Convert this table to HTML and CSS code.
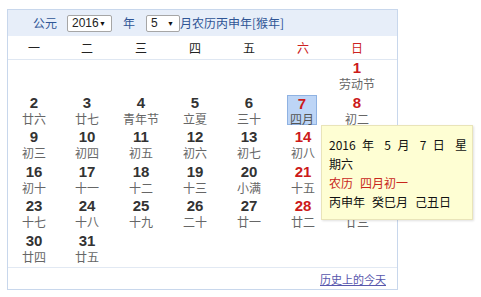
FILE: index.html
```html
<!DOCTYPE html>
<html lang="zh-CN">
<head>
<meta charset="utf-8">
<title>万年历</title>
<link rel="stylesheet" href="styles.css">
</head>
<body>
<div class="cal">
  <div class="cal-head">
    <span class="lbl lbl-era">公元</span>
    <span class="sel sel-year"><span>2016</span><i class="arr">▼</i></span>
    <span class="lbl lbl-year">年</span>
    <span class="sel sel-month"><span>5</span><i class="arr">▼</i></span>
    <span class="lbl">月农历丙申年[猴年]</span>
  </div>
  <div class="weekdays">
    <span>一</span><span>二</span><span>三</span><span>四</span><span>五</span><span class="we">六</span><span class="we">日</span>
  </div>
  <div class="days">
    <div class="cell"></div><div class="cell"></div><div class="cell"></div><div class="cell"></div><div class="cell"></div><div class="cell"></div>
    <div class="cell we"><b>1</b><span>劳动节</span></div>

    <div class="cell"><b>2</b><span>廿六</span></div>
    <div class="cell"><b>3</b><span>廿七</span></div>
    <div class="cell"><b>4</b><span>青年节</span></div>
    <div class="cell"><b>5</b><span>立夏</span></div>
    <div class="cell"><b>6</b><span>三十</span></div>
    <div class="cell we"><div class="today"><b>7</b><span>四月</span></div></div>
    <div class="cell we"><b>8</b><span>初二</span></div>

    <div class="cell"><b>9</b><span>初三</span></div>
    <div class="cell"><b>10</b><span>初四</span></div>
    <div class="cell"><b>11</b><span>初五</span></div>
    <div class="cell"><b>12</b><span>初六</span></div>
    <div class="cell"><b>13</b><span>初七</span></div>
    <div class="cell we"><b>14</b><span>初八</span></div>
    <div class="cell we"><b>15</b><span>初九</span></div>

    <div class="cell"><b>16</b><span>初十</span></div>
    <div class="cell"><b>17</b><span>十一</span></div>
    <div class="cell"><b>18</b><span>十二</span></div>
    <div class="cell"><b>19</b><span>十三</span></div>
    <div class="cell"><b>20</b><span>小满</span></div>
    <div class="cell we"><b>21</b><span>十五</span></div>
    <div class="cell we"><b>22</b><span>十六</span></div>

    <div class="cell"><b>23</b><span>十七</span></div>
    <div class="cell"><b>24</b><span>十八</span></div>
    <div class="cell"><b>25</b><span>十九</span></div>
    <div class="cell"><b>26</b><span>二十</span></div>
    <div class="cell"><b>27</b><span>廿一</span></div>
    <div class="cell we"><b>28</b><span>廿二</span></div>
    <div class="cell we"><b>29</b><span>廿三</span></div>

    <div class="cell"><b>30</b><span>廿四</span></div>
    <div class="cell"><b>31</b><span>廿五</span></div>
  </div>
  <div class="cal-foot"><a href="#" class="hist">历史上的今天</a></div>

  <div class="tip">
    <div class="tip-l1">2016 年 5 月 7 日 星</div>
    <div>期六</div>
    <div class="tip-lunar"><span>农历</span><span>四月初一</span></div>
    <div class="tip-gz"><span>丙申年</span><span>癸巳月</span><span>己丑日</span></div>
  </div>
</div>
</body>
</html>
```

FILE: styles.css
```css
html, body {
  margin: 0;
  padding: 0;
  background: #fff;
}
body {
  font-family: "Noto Sans CJK SC", "Liberation Sans", sans-serif;
  font-size: 12px;
  color: #333;
}
.cal {
  position: relative;
  box-sizing: border-box;
  width: 391px;
  margin: 9px 0 0 7px;
  border: 1px solid #c8d7ec;
}
.cal-head {
  height: 26px;
  background: #e7eef9;
  display: flex;
  align-items: center;
  padding-left: 25px;
  color: #2f5596;
}
.lbl {
  line-height: 16px;
  white-space: nowrap;
}
.sel {
  box-sizing: border-box;
  height: 17px;
  display: flex;
  align-items: center;
  justify-content: space-between;
  background: #fff;
  border: 1px solid #a6a6a6;
  border-radius: 2px;
  padding: 0 5px 0 4px;
  font-family: "Liberation Sans", Arial, sans-serif;
  font-size: 12px;
  color: #222;
}
.sel-year { width: 45px; margin-left: 10px; }
.sel-month { width: 34px; margin-left: 11px; }
.lbl-year { margin-left: 11px; }
.arr {
  font-style: normal;
  font-size: 7px;
  color: #111;
}
.weekdays {
  display: grid;
  grid-template-columns: 52px repeat(6, 54px);
  height: 23px;
  align-items: center;
  border-bottom: 1px solid #dfe7f2;
}
.weekdays span {
  text-align: center;
  color: #222;
}
.weekdays span.we { color: #c22; }

.days {
  display: grid;
  grid-template-columns: 52px repeat(6, 54px);
  grid-auto-rows: 34.5px;
  height: 207px;
  align-content: start;
}
.cell {
  display: flex;
  flex-direction: column;
  align-items: center;
}
.cell b, .today b {
  display: block;
  font-family: "Liberation Sans", Arial, sans-serif;
  font-size: 15px;
  line-height: 16px;
  font-weight: bold;
  color: #333;
}
.cell span, .today span {
  display: block;
  line-height: 15px;
  color: #666;
  white-space: nowrap;
}
.cell.we b { color: #cc1a1a; }
.today {
  box-sizing: border-box;
  width: 30px;
  height: 30px;
  margin-top: 0.5px;
  margin-left: -2px;
  background: #bdd5f6;
  border: 1px solid #8fb2e2;
  display: flex;
  flex-direction: column;
  align-items: center;
}
.today span { line-height: 13px; color: #555; }

.cal-foot {
  height: 21px;
  border-top: 1px solid #e2e9f3;
  display: flex;
  align-items: center;
  justify-content: flex-end;
  padding-right: 11px;
}
.hist {
  color: #5757ad;
  text-decoration: underline;
  font-size: 11px;
  line-height: 16px;
}

.tip {
  position: absolute;
  left: 313px;
  top: 115px;
  box-sizing: border-box;
  width: 152px;
  height: 95px;
  padding: 9px 5px 0 7px;
  background: #fefed3;
  border: 1px solid #e9e4b9;
  box-shadow: 1px 1px 2px rgba(0, 0, 0, 0.12);
  color: #111;
  line-height: 19px;
}
.tip-l1 {
  text-align: justify;
  text-align-last: justify;
}
.tip-lunar { color: #c8261b; }
.tip-lunar span, .tip-gz span { margin-right: 7px; }
```
